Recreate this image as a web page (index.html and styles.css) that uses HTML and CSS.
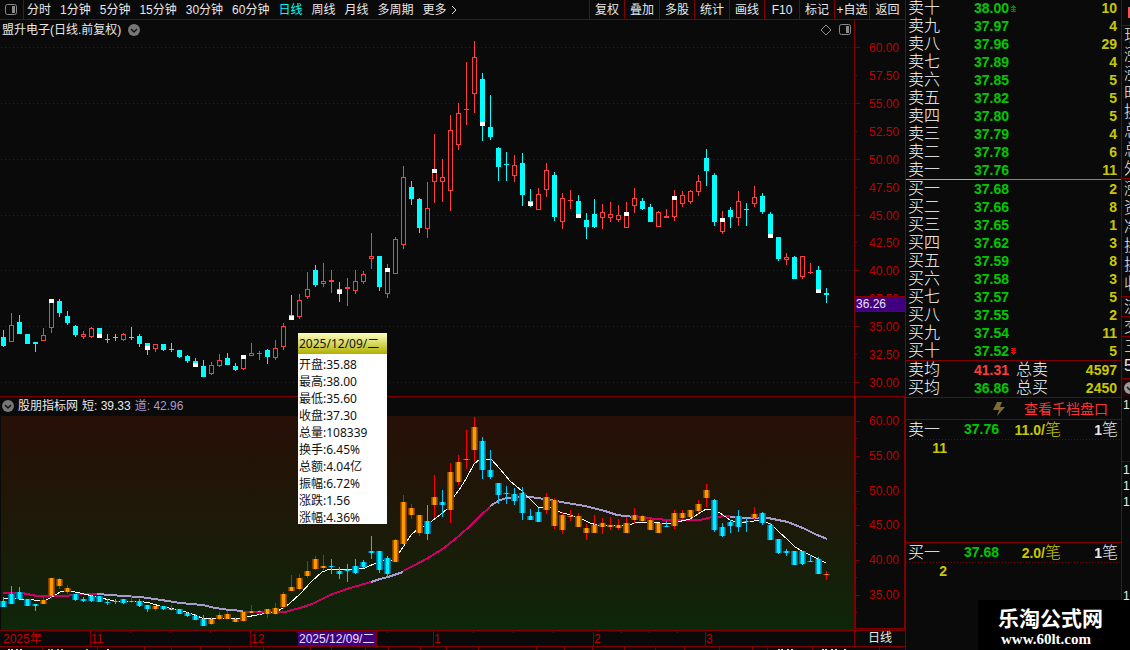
FILE: index.html
```html
<!DOCTYPE html>
<html lang="zh-CN">
<head>
  <meta charset="UTF-8">
  <meta name="viewport" content="width=device-width, initial-scale=1.0">
  <title>盟升电子 日线</title>
  <link rel="stylesheet" href="styles.css">
</head>
<body>
  <main class="charts">
    <nav class="toolbar">
      <button class="layout-btn" aria-label="布局">
        <svg width="12" height="12"><rect x="0.5" y="0.5" width="11" height="10" rx="2" fill="none" stroke="#8a8a8a"/><rect x="7" y="2" width="3" height="7" fill="#8a8a8a"/></svg>
      </button>
      <div class="periods">
        <button>分时</button>
        <button>1分钟</button>
        <button>5分钟</button>
        <button>15分钟</button>
        <button>30分钟</button>
        <button>60分钟</button>
        <button class="active">日线</button>
        <button>周线</button>
        <button>月线</button>
        <button>多周期</button>
        <button class="more">更多<svg width="6" height="10"><path d="M1 1l4 4l-4 4" fill="none" stroke="#ddd"/></svg></button>
      </div>
      <div class="tools">
        <button>复权</button>
        <button>叠加</button>
        <button>多股</button>
        <button>统计</button>
        <button>画线</button>
        <button>F10</button>
        <button>标记</button>
        <button>+自选</button>
        <button>返回</button>
      </div>
    </nav>

    <section class="pane">
      <div class="plot">
        <div class="pane-title">
          <span>盟升电子(日线.前复权)</span>
          <svg class="fold" width="12" height="12"><circle cx="6" cy="6" r="6" fill="#777"/><path d="M3 5l3 3l3-3" fill="none" stroke="#111" stroke-width="1.5"/></svg>
          <span class="pane-icons">
            <svg width="12" height="12"><path d="M6 1l5 5l-5 5l-5-5z" fill="none" stroke="#8a8a8a"/></svg>
            <svg width="12" height="12"><rect x="0.5" y="0.5" width="11" height="10" rx="2" fill="none" stroke="#8a8a8a"/><rect x="7" y="2" width="3" height="7" fill="#8a8a8a"/></svg>
          </span>
        </div>
        <svg class="canvas" id="priceChart" height="358"></svg>
      </div>
      <svg class="axis" id="priceAxis" height="376"></svg>
    </section>

    <section class="pane pane-sub">
      <div class="plot">
        <div class="pane-title sub-title">
          <svg class="fold" width="12" height="12"><circle cx="6" cy="6" r="6" fill="#777"/><path d="M3 5l3 3l3-3" fill="none" stroke="#111" stroke-width="1.5"/></svg>
          <span>股朋指标网</span>
          <span>短: 39.33</span>
          <span class="channel">道: 42.96</span>
        </div>
        <svg class="canvas sub-canvas" id="subChart" height="214"></svg>
      </div>
      <svg class="axis" id="subAxis" height="232"></svg>
    </section>

    <section class="timeline">
      <svg class="canvas" id="timeAxis" height="15"></svg>
      <button class="period">日线</button>
    </section>
    <svg class="ticker" id="ticker" height="3"></svg>

    <div class="tip">
      <div class="tip-date">2025/12/09/二</div>
      <ul>
        <li>开盘:35.88</li>
        <li>最高:38.00</li>
        <li>最低:35.60</li>
        <li>收盘:37.30</li>
        <li>总量:108339</li>
        <li>换手:6.45%</li>
        <li>总额:4.04亿</li>
        <li>振幅:6.72%</li>
        <li>涨跌:1.56</li>
        <li>涨幅:4.36%</li>
      </ul>
    </div>
  </main>

  <aside class="book">
    <table class="levels">
      <tbody id="asks"></tbody>
    </table>
    <div class="ratio"><i></i></div>
    <table class="levels">
      <tbody id="bids"></tbody>
    </table>
    <table class="levels averages">
      <tr><th>卖均</th><td class="price up">41.31</td><th class="total">总卖</th><td class="vol">4597</td></tr>
      <tr><th>买均</th><td class="price">36.86</td><th class="total">总买</th><td class="vol">2450</td></tr>
    </table>
    <div class="depth">
      <svg width="12" height="14"><path d="M4 0h5l-2 5h5l-8 9l2-6h-6z" fill="#7d6c30"/></svg>
      <a href="#">查看千档盘口</a>
    </div>
    <section class="queue">
      <div class="queue-head"><b class="side-name">卖一</b><b class="price">37.76</b><b class="avg">11.0/<span>笔</span></b><b class="count">1<span>笔</span></b></div>
      <div class="queue-item">11</div>
    </section>
    <section class="queue">
      <div class="queue-head"><b class="side-name">买一</b><b class="price">37.68</b><b class="avg">2.0/<span>笔</span></b><b class="count">1<span>笔</span></b></div>
      <div class="queue-item">2</div>
    </section>
  </aside>

  <aside class="quote">
    <div class="quote-top"><i></i></div>
    <ul><li>现</li><li>涨</li><li>涨</li><li>时</li><li>换</li><li>总</li><li>总</li><li>外</li></ul>
    <ul class="second"><li>涨</li><li>资</li><li>净</li><li>换</li><li>换</li><li>收</li></ul>
    <ul><li>流</li></ul>
    <ul><li>交</li></ul>
    <ul class="pair"><li>三</li><li><b>5</b></li></ul>
    <div class="quote-tab"><svg width="12" height="12"><circle cx="6" cy="6" r="6" fill="#999"/><path d="M3 5l3 3l3-3" fill="none" stroke="#111" stroke-width="1.5"/></svg></div>
    <ol class="ticks-first"><li>1</li></ol>
    <ol class="ticks"><li>1</li><li>1</li><li>1</li></ol>
    <ol class="ticks-last"><li>1</li></ol>
  </aside>

  <div class="brand">
    <div class="brand-name">乐淘公式网</div>
    <div class="brand-url">www.60lt.com</div>
  </div>

  <script src="chart.js"></script>
</body>
</html>
```

FILE: styles.css
```css
:root {
  --bg: #0a0a0a;
  --line: #800000;
  --axis: #c00000;
  --text: #e8e8e8;
  --green: #00c800;
  --red: #ff3c3c;
  --yellow: #c8c800;
  --violet: #a89bd0;
}

* {
  box-sizing: border-box;
}

body {
  display: flex;
  height: 100vh;
  margin: 0;
  overflow: hidden;
  position: relative;
  background: var(--bg);
  color: var(--text);
  font: 12px/18px "Liberation Sans", "Noto Sans CJK SC", sans-serif;
}

svg {
  display: block;
  flex: none;
}

button {
  padding: 0;
  border: 0;
  background: none;
  color: inherit;
  font: inherit;
  white-space: nowrap;
  cursor: pointer;
}

ul, ol {
  list-style: none;
  margin: 0;
  padding: 0;
}

.charts {
  flex: 1;
  min-width: 0;
  position: relative;
}

/* toolbar */
.toolbar {
  display: flex;
  height: 20px;
  border-bottom: 1px solid var(--line);
}

.layout-btn {
  width: 24px;
  padding-left: 5px;
  border-right: 1px solid var(--line);
}

.periods {
  display: flex;
  flex: 1;
  gap: 9px;
  padding-left: 3px;
}

.periods .active {
  color: #00ffff;
}

.more {
  display: flex;
  align-items: center;
  gap: 4px;
}

.tools {
  display: flex;
}

.tools button {
  width: 35px;
  border-left: 1px solid var(--line);
}

.tools button:last-child {
  width: 36px;
}

/* panes */
.pane {
  display: flex;
  border-bottom: 1px solid var(--line);
}

.plot {
  flex: 1;
  min-width: 0;
}

.pane-title {
  display: flex;
  align-items: center;
  gap: 7px;
  height: 18px;
  padding: 2px 3px 0 2px;
}

.pane-icons {
  display: flex;
  gap: 7px;
  margin-left: auto;
}

.sub-title {
  gap: 4px;
  height: 19px;
  padding: 0 2px 2px;
}

.channel {
  color: var(--violet);
}

.canvas {
  width: 100%;
}

.axis {
  width: 51px;
  border-left: 1px solid var(--line);
}

.pane-sub .axis {
  border-left-width: 2px;
  border-right: 1px solid var(--line);
}

.sub-canvas {
  background: linear-gradient(#271007, #1d1908 50%, #0e260a);
}

.axis text, .canvas text {
  fill: var(--axis);
  font-size: 12px;
}

.axis .cursor-text, .canvas .cursor-text {
  fill: #e8e0ff;
}

.timeline {
  display: flex;
  border-bottom: 1px solid var(--line);
}

.timeline .canvas {
  flex: 1;
  min-width: 0;
}

.period {
  width: 51px;
  height: 15px;
  line-height: 15px;
  border-left: 1px solid var(--line);
}

.ticker {
  width: 100%;
}

/* day details box over the chart */
.tip {
  position: absolute;
  left: 298px;
  top: 333px;
  width: 89px;
  background: #fff;
  color: #111;
  font: 12px/17px "Noto Sans", "Noto Sans CJK SC", sans-serif;
}

.tip-date {
  height: 21px;
  padding-left: 1px;
  line-height: 21px;
  background: linear-gradient(#ffffc0, #b0b000);
}

.tip ul {
  padding: 2px 0 0 1px;
  height: 170px;
}

/* order book */
.book {
  flex: none;
  width: 217px;
  height: calc(100vh + 1px);
  margin-top: -1px;
  border-left: 1px solid var(--line);
  border-right: 1px solid var(--line);
  font-size: 14px;
}

.levels {
  width: 100%;
  table-layout: fixed;
  border-collapse: collapse;
}

.levels th, .levels td {
  height: 18px;
  padding: 0;
  line-height: 18px;
}

.levels th {
  width: 48px;
  padding-left: 2px;
  color: #fff;
  text-align: left;
  font-size: 16px;
  font-weight: 300;
}

.price {
  width: 55px;
  color: var(--green);
  font-weight: bold;
  text-align: right;
}

.price.up {
  color: var(--red);
}

.mark {
  width: 50px;
}

.levels .mark {
  padding-left: 2px;
}

.levels .total {
  width: 50px;
  padding-left: 7px;
}

.levels .vol {
  padding-right: 4px;
  color: var(--yellow);
  font-weight: bold;
  text-align: right;
}

.ratio {
  height: 1px;
  background: #4b8fe0;
}

.ratio i {
  display: block;
  width: 36%;
  height: 1px;
  background: #e0a040;
}

.averages {
  border-top: 1px solid var(--line);
}

.depth {
  display: flex;
  justify-content: flex-end;
  align-items: center;
  gap: 19px;
  height: 22px;
  padding-right: 13px;
  border-top: 1px solid var(--line);
}

.depth a {
  color: #ff3232;
  text-decoration: none;
}

.queue {
  height: 123px;
  border-top: 1px solid var(--line);
}

.queue-head {
  display: grid;
  grid-template-columns: 48px 45px 62px 1fr;
  height: 20px;
  padding-right: 3px;
  background: repeating-linear-gradient(90deg, var(--line) 0 1px, transparent 1px 3px) bottom / 100% 1px no-repeat;
  line-height: 19px;
  text-align: right;
}

.queue-head span, .side-name {
  font-size: 16px;
  font-weight: 300;
}

.side-name {
  padding-left: 2px;
  color: #fff;
  text-align: left;
}

.queue-head .price {
  width: auto;
}

.avg, .queue-item {
  color: var(--yellow);
}

.queue-item {
  width: 41px;
  font-weight: bold;
  line-height: 17px;
  text-align: right;
}

/* quote column, cut by the window edge */
.quote {
  flex: none;
  width: 8px;
  overflow: hidden;
  font-size: 16px;
  line-height: 19px;
}

.quote-top {
  height: 25px;
  padding: 7px 0 0 6px;
}

.quote-top i {
  display: block;
  height: 11px;
  background: #ff5050;
}

.quote ul {
  padding-left: 2px;
  border-top: 1px solid var(--line);
  font-weight: 300;
}

.quote li {
  width: 16px;
  height: 19px;
}

.quote .second {
  height: 118px;
}

.quote .pair {
  height: 42px;
}

.quote-tab {
  height: 19px;
  padding: 3px 0 0 2px;
  border-top: 1px solid var(--line);
  background: #1c0808;
}

.quote ol {
  padding-left: 1px;
  font-size: 12px;
  line-height: 16px;
}

.quote ol li {
  height: 16px;
}

.ticks-first {
  height: 64px;
}

.ticks {
  height: 127px;
  border-top: 1px dotted var(--line);
}

.brand {
  position: absolute;
  right: 0;
  bottom: 0;
  width: 152px;
  height: 50px;
  padding: 6px 0 0 20px;
  background: #000;
  color: #fff;
  font-weight: bold;
}

.brand-name {
  font-size: 21px;
  line-height: 25px;
}

.brand-url {
  padding-left: 3px;
  font: bold 15px/16px "Liberation Serif", serif;
}
```

FILE: chart.js
```js
// [high, body top, body bottom, low, kind], y in window pixels
// u = rising, d = falling, capital letter = candle with a white signal mark
const candles = [
  [330,337,346,347,'d'],[313,325,342,342,'u'],[315,322,334,334,'d'],[334,334,344,344,'d'],
  [342,342,344,352,'d'],[328,335,341,341,'u'],[299,299,328,333,'U'],[299,301,313,317,'d'],
  [311,316,323,325,'d'],[325,326,335,337,'d'],[331,334,337,339,'u'],[327,328,337,338,'u'],
  [328,328,338,338,'D'],[334,339,340,343,'d'],[334,337,338,341,'d'],[333,334,340,341,'u'],
  [327,337,338,340,'d'],[334,336,344,347,'d'],[343,343,350,355,'D'],[344,344,349,352,'u'],
  [344,344,350,351,'d'],[343,349,350,352,'d'],[350,350,357,358,'d'],[355,356,361,363,'d'],
  [358,361,367,367,'D'],[360,366,377,377,'d'],[362,365,374,375,'u'],[354,360,366,367,'u'],
  [353,358,365,365,'d'],[363,366,370,371,'d'],[355,355,369,370,'U'],[343,353,356,356,'u'],
  [351,353,354,360,'u'],[349,350,357,364,'d'],[340,348,358,360,'u'],[323,326,347,350,'u'],
  [295,315,320,320,'D'],[294,300,317,319,'u'],[272,289,297,299,'u'],[265,270,285,287,'d'],
  [263,281,284,287,'u'],[270,280,282,293,'u'],[282,289,294,302,'D'],[278,287,289,306,'u'],
  [270,281,291,294,'u'],[271,274,282,284,'u'],[233,256,259,269,'u'],[256,256,287,291,'d'],
  [264,268,294,298,'U'],[237,239,274,274,'u'],[166,177,245,249,'u'],[181,187,199,205,'d'],
  [198,199,228,233,'d'],[182,208,229,238,'u'],[134,169,182,203,'U'],[159,177,182,202,'u'],
  [115,130,191,211,'u'],[103,113,145,150,'u'],[62,109,110,125,'u'],[41,57,94,113,'u'],
  [73,79,126,141,'D'],[95,127,137,140,'d'],[147,148,167,181,'d'],[152,164,165,181,'d'],
  [155,165,176,182,'u'],[153,163,195,206,'d'],[189,201,206,207,'D'],[188,194,210,210,'u'],
  [163,170,190,197,'u'],[172,175,217,221,'d'],[193,198,222,229,'u'],[190,200,201,209,'u'],
  [195,201,218,218,'D'],[213,220,227,239,'d'],[199,214,227,228,'d'],[204,212,218,229,'u'],
  [202,214,218,222,'u'],[205,215,220,222,'u'],[202,212,228,228,'U'],[188,198,206,213,'u'],
  [198,201,209,210,'d'],[204,207,222,222,'d'],[211,212,227,227,'u'],[209,216,218,218,'u'],
  [190,196,217,221,'U'],[191,195,204,207,'u'],[190,191,202,204,'u'],[175,181,192,196,'u'],
  [149,158,171,186,'d'],[173,175,222,226,'d'],[211,218,232,234,'U'],[207,210,217,228,'d'],
  [191,201,218,226,'u'],[203,209,210,226,'d'],[186,197,204,207,'u'],[193,196,212,214,'d'],
  [212,214,238,238,'D'],[237,237,259,261,'d'],[253,257,260,265,'u'],[256,257,279,279,'d'],
  [256,256,277,279,'u'],[263,272,273,274,'u'],[266,270,293,293,'D'],[288,293,295,303,'d']
];

// colour of each candle in the indicator pane: o = orange, c = cyan
const trend = 'cccccooooc' + 'ccccccocco' + 'coccccoooo' + 'oooooooooo' + 'occcccccco' +
  'ooococoooo' + 'ccccccccoo' + 'oooooooooo' + 'ooocoooooc' + 'ccccoccccc' + 'ccco';

const shortLine = '3,598 19,599 27,599 40,601 46,600 52,597 60,592 70,591 80,593 97,597 114,601 138,601 150,603 163,607 180,610 192,614 202,618 228,618 236,619 246,617 257,615 268,613 278,611 289,604 300,594 312,581 322,572 330,569 355,569 365,568 376,563 382,560 392,560 399,553 403,547 411,535 418,529 428,524 440,515 447,509 453,498 459,490 466,479 474,464 480,459 491,459 500,469 510,481 522,491 529,498 538,507 551,508 560,512 580,518 590,523 597,525 620,526 632,524 637,522 649,522 660,523 667,524 673,523 690,519 698,514 706,509 713,509 720,513 730,520 738,523 747,522 762,520 772,525 780,533 787,539 795,547 802,551 810,555 818,559 826,563';

const channelLines = [
  ['#cc0066', '3,593 22,593 37,596 65,596 80,594 97,594'],
  ['#a89bd0', '97,594 123,596 140,597 155,599 180,603 203,605 215,608 230,610 243,611'],
  ['#cc0066', '243,612 285,612 300,608 312,604 330,595 350,588 371,582'],
  ['#a89bd0', '371,582 380,579 388,577 403,572'],
  ['#cc0066', '403,571 413,566 428,558 444,548 460,535 470,526 480,516 490,507'],
  ['#a89bd0', '490,506 500,500 507,498 530,497 545,499 567,503 585,506 605,511 617,515 634,517'],
  ['#cc0066', '634,517 646,518 668,520 700,520 712,517 730,516'],
  ['#a89bd0', '730,517 750,518 768,518 788,522 805,529 815,534 827,539']
];

const candleX = i => (i < 54 ? 3 : 2) + 8 * i;
const subY = y => Math.round(420.8 + (y - 47.3) * 0.6226);
const rect = (x, y, w, h, fill) => `<rect x="${x}" y="${y}" width="${w}" height="${h}" fill="${fill}"/>`;

function drawPrice() {
  let out = '';
  for (let p = 60; p >= 30; p -= 5) {
    const y = Math.round(47 + (60 - p) * 11.17) + 0.5;
    out += `<line x1="1" x2="100%" y1="${y}" y2="${y}" stroke="#700000" stroke-dasharray="1 3"/>`;
  }
  candles.forEach(([high, top, bottom, low, kind], i) => {
    const x = candleX(i);
    const up = kind.toLowerCase() === 'u';
    const color = up ? '#ff3c3c' : '#00ffff';
    out += rect(x, high, 1, top - high, color) + rect(x, bottom, 1, low - bottom, color);
    if (up && bottom - top > 2) {
      out += `<rect x="${x - 1.5}" y="${top + 0.5}" width="4" height="${bottom - top - 1}" fill="none" stroke="${color}"/>`;
    } else {
      out += rect(x - 2, top, 5, bottom - top, color);
    }
    if (kind === 'U') out += rect(x - 2, top, 5, 4, '#fff');
    if (kind === 'D') out += rect(x - 2, bottom - 4, 5, 4, '#fff');
  });
  document.getElementById('priceChart').innerHTML =
    `<g transform="translate(0 -38)" shape-rendering="crispEdges">${out}</g>`;
}

function drawSub() {
  let out = rect(0, 416, 1, 214, '#0a0a0a');
  channelLines.forEach(([color, points]) => {
    out += `<polyline points="${points}" fill="none" stroke="${color}" stroke-width="2"/>`;
  });
  out += `<polyline points="${shortLine}" fill="none" stroke="#fff"/>`;
  candles.forEach(([high, top, bottom, low], i) => {
    const x = candleX(i);
    const [wick, edge, mid, core] = trend[i] === 'o'
      ? ['#ff0000', '#7a3c00', '#a85a00', '#ff9900']
      : ['#00c8ff', '#006890', '#0098c0', '#00f0ff'];
    const y = subY(top);
    const h = Math.max(1, subY(bottom) - y);
    out += rect(x, subY(high), 1, subY(low) - subY(high), wick);
    out += rect(x - 3, y, 7, h, edge) + rect(x - 2, y, 5, h, mid) + rect(x - 1, y, 3, h, core);
  });
  document.getElementById('subChart').innerHTML =
    `<g transform="translate(0 -416)" shape-rendering="crispEdges">${out}</g>`;
}

function drawAxes() {
  let out = '';
  for (let p = 60; p >= 30; p -= 2.5) {
    const y = Math.round(47 + (60 - p) * 11.17);
    out += rect(0, y, p % 5 ? 2 : 5, 1, '#800000');
    out += `<text x="44" y="${y + 5}" text-anchor="end">${p.toFixed(2)}</text>`;
  }
  out += '<rect x="-0.5" y="296.5" width="51" height="15" fill="#400080" stroke="#800000"/>';
  out += '<text class="cursor-text" x="1" y="308">36.26</text>';
  document.getElementById('priceAxis').innerHTML = `<g transform="translate(0 -20)">${out}</g>`;

  out = '';
  for (let p = 60; p >= 32.5; p -= 2.5) {
    const y = Math.round(421 + (60 - p) * 6.95);
    out += rect(0, y, p % 5 ? 1 : 4, 1, '#800000');
    if (p % 5 === 0) out += `<text x="43" y="${y + 4}" text-anchor="end">${p.toFixed(2)}</text>`;
  }
  out += rect(0, 628, 51, 1, '#800000');
  document.getElementById('subAxis').innerHTML = `<g transform="translate(0 -397)">${out}</g>`;

  out = '<text x="3" y="12">2025年</text>';
  [[90, '11'], [250, '12'], [433, '1'], [593, '2'], [705, '3']].forEach(([x, label]) => {
    out += rect(x, 0, 1, 15, '#800000') + `<text x="${x + 1}" y="12">${label}</text>`;
  });
  [130, 170, 210, 296, 387, 473, 513, 553, 621, 649, 677].forEach(x => {
    out += rect(x, 0, 1, 2, '#800000');
  });
  out += rect(298, 0, 78, 15, '#400080') + rect(376, 0, 1, 15, '#800000');
  out += '<text class="cursor-text" x="299" y="12">2025/12/09/二</text>';
  document.getElementById('timeAxis').innerHTML = out;

  out = '';
  [42, 97, 144, 171, 200, 229, 263, 310, 331, 365, 388, 420, 446, 478, 536, 564, 592, 624, 655, 684, 719, 752, 767, 812, 879].forEach(x => {
    out += rect(x, 0, 1, 3, '#800000');
  });
  [[8, '#ddd'], [11, '#ddd'], [16, '#ddd'], [20, '#ddd'], [48, '#c8c800'], [51, '#c8c800'], [57, '#c8c800'], [61, '#c8c800'], [86, '#c8c800'], [107, '#ddd'],
    [778, '#ddd'], [781, '#ddd'], [787, '#ddd'], [791, '#ddd'], [822, '#ddd'], [825, '#ddd'], [831, '#ddd'], [835, '#ddd'], [844, '#ddd']].forEach(([x, color]) => {
    out += rect(x, 2, 2, 1, color);
  });
  document.getElementById('ticker').innerHTML = out;
}

const asks = [['十', '38.00', 10], ['九', '37.97', 4], ['八', '37.96', 29], ['七', '37.89', 4], ['六', '37.85', 5],
  ['五', '37.82', 5], ['四', '37.80', 5], ['三', '37.79', 4], ['二', '37.78', 6], ['一', '37.76', 11]];
const bids = [['一', '37.68', 2], ['二', '37.66', 8], ['三', '37.65', 1], ['四', '37.62', 3], ['五', '37.59', 8],
  ['六', '37.58', 3], ['七', '37.57', 5], ['八', '37.55', 2], ['九', '37.54', 11], ['十', '37.52', 5]];

const marks = {
  '38.00': '<svg width="5" height="7"><path d="M2 0h1v1h1v1h1v1h-2v1h2v1h-2v1h2v1h-5v-1h2v-1h-2v-1h2v-1h-2v-1h1v-1h1z" fill="#008c00"/></svg>',
  '37.52': '<svg width="5" height="7"><path d="M0 0h5v1h-2v1h2v1h-2v1h2v1h-1v1h-1v1h-1v-1h-1v-1h-1v-1h2v-1h-2v-1h2v-1h-2z" fill="#ff0000"/></svg>'
};

function fillBook(id, side, rows) {
  document.getElementById(id).innerHTML = rows.map(([level, price, vol]) =>
    `<tr><th>${side}${level}</th><td class="price">${price}</td><td class="mark">${marks[price] || ''}</td><td class="vol">${vol}</td></tr>`
  ).join('');
}

fillBook('asks', '卖', asks);
fillBook('bids', '买', bids);
drawPrice();
drawSub();
drawAxes();
```
